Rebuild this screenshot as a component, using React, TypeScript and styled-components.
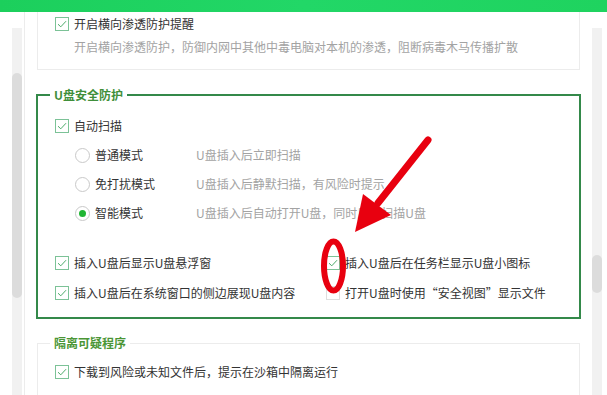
import React from "react"
import styled, { createGlobalStyle } from "styled-components"

const Global = createGlobalStyle`
  html, body {
    margin      : 0 ;
    padding     : 0 ;
    background  : #ffffff ;
    overflow    : hidden ;
  }
  body {
    font-family : "Noto Sans CJK SC", "Microsoft YaHei", sans-serif ;
    font-size   : 12px ;
    color       : #333333 ;
  }
`

const Page = styled.div`
  position        : relative ;
  width           : 607px ;
  height          : 395px ;
  display         : flex ;
  flex-direction  : column ;
  overflow        : hidden ;
`

const TitleBar = styled.div`
  height      : 12px ;
  flex        : none ;
  background  : linear-gradient(90deg, #1ccf5c 0%, #22d767 50%, #1fd35f 100%) ;
`

const Body = styled.div`
  flex      : 1 ;
  display   : flex ;
  min-height: 0 ;
`

const Rail = styled.div<{ $side: "left" | "right" }>`
  flex            : none ;
  width           : ${p => (p.$side === "left" ? "25px" : "15px")} ;
  padding-top     : 16px ;
  padding-left    : ${p => (p.$side === "left" ? "12px" : "0")} ;
  box-sizing      : border-box ;
  border-right    : ${p => (p.$side === "left" ? "1px solid #ececec" : "none")} ;
  display         : flex ;
  flex-direction  : column ;
`

const Track = styled.div<{ $offset: number }>`
  width       : 10px ;
  flex        : 1 ;
  background  : #f1f1f1 ;
  padding-top : ${p => p.$offset}px ;
  box-sizing  : border-box ;
`

const Thumb = styled.div<{ $h: number }>`
  height        : ${p => p.$h}px ;
  background    : #dcdcdc ;
  border-radius : 5px ;
`

const Content = styled.div`
  flex            : 1 ;
  padding         : 0 11px 0 11px ;
  display         : flex ;
  flex-direction  : column ;
  min-width       : 0 ;
`

const Card = styled.div`
  border        : 1px solid #ececec ;
  border-top    : none ;
  padding       : 5px 0 15px 17px ;
  margin-left   : 1px ;
  margin-right  : 1px ;
`

const Group = styled.fieldset<{ $strong?: boolean }>`
  margin      : ${p => (p.$strong ? "17px 0 0 0" : "16px 1px 0 1px")} ;
  padding     : 0 ;
  border      : ${p => (p.$strong ? "2px solid #34894a" : "1px solid #ececec")} ;
  min-width   : 0 ;
`

const Legend = styled.legend<{ $tone?: string }>`
  margin-left : 12px ;
  padding     : 0 4px ;
  font-size   : 12px ;
  line-height : 16px ;
  font-weight : bold ;
  color       : ${p => p.$tone || "#3f8f3a"} ;
`

const Inner = styled.div<{ $pt: number; $pb: number }>`
  padding : ${p => p.$pt}px 0 ${p => p.$pb}px 17px ;
`

const Row = styled.div`
  display     : flex ;
  align-items : center ;
  height      : 14px ;
  line-height : 14px ;
  white-space : nowrap ;
`

const Box = styled.span<{ $on: boolean }>`
  flex            : none ;
  width           : 14px ;
  height          : 14px ;
  box-sizing      : border-box ;
  border          : 1px solid ${p => (p.$on ? "#7cc297" : "#dedede")} ;
  background      : #ffffff ;
  margin-right    : 5px ;
  display         : flex ;
  align-items     : center ;
  justify-content : center ;
`

const Dot = styled.span<{ $on: boolean }>`
  flex            : none ;
  width           : 15px ;
  height          : 15px ;
  box-sizing      : border-box ;
  border-radius   : 50% ;
  border          : 1px solid #c9c9c9 ;
  background      : #ffffff ;
  margin-right    : 5px ;
  display         : flex ;
  align-items     : center ;
  justify-content : center ;
  &::after {
    content       : "" ;
    width         : 7px ;
    height        : 7px ;
    border-radius : 50% ;
    background    : ${p => (p.$on ? "#20b534" : "transparent")} ;
  }
`

const Desc = styled.div`
  margin-top  : 9px ;
  margin-left : 19px ;
  line-height : 14px ;
  color       : #a3a3a3 ;
  white-space : nowrap ;
`

const Modes = styled.div`
  margin-left     : 20px ;
  margin-top      : 15px ;
  display         : flex ;
  flex-direction  : column ;
  gap             : 15px ;
`

const ModeName = styled.span`
  width : 101px ;
`

const ModeHint = styled.span`
  color : #a3a3a3 ;
`

const Options = styled.div`
  margin-top            : 36px ;
  display               : grid ;
  grid-template-columns : 271px 1fr ;
  row-gap               : 16px ;
`

const Mark = styled.div`
  position        : absolute ;
  inset           : 0 ;
  pointer-events  : none ;
`

function Check({ on, children }: { on: boolean; children: React.ReactNode }) {
  return (
    <Row>
      <Box $on={on}>
        {on && (
          <svg width="10" height="8" viewBox="0 0 10 8">
            <path d="M1 4.2 L3.8 6.8 L9 1.2" fill="none" stroke="#4dab6a" strokeWidth="1" />
          </svg>
        )}
      </Box>
      {children}
    </Row>
  )
}

function Mode({ on, name, hint }: { on: boolean; name: string; hint: string }) {
  return (
    <Row>
      <Dot $on={on} />
      <ModeName>{name}</ModeName>
      <ModeHint>{hint}</ModeHint>
    </Row>
  )
}

export default function App() {
  return (
    <Page>
      <Global />
      <TitleBar />
      <Body>
        <Rail $side="left">
          <Track $offset={45}>
            <Thumb $h={225} />
          </Track>
        </Rail>
        <Content>
          <Card>
            <Check on>开启横向渗透防护提醒</Check>
            <Desc>开启横向渗透防护，防御内网中其他中毒电脑对本机的渗透，阻断病毒木马传播扩散</Desc>
          </Card>

          <Group $strong>
            <Legend>U盘安全防护</Legend>
            <Inner $pt={16} $pb={17}>
              <Check on>自动扫描</Check>
              <Modes>
                <Mode on={false} name="普通模式" hint="U盘插入后立即扫描" />
                <Mode on={false} name="免打扰模式" hint="U盘插入后静默扫描，有风险时提示" />
                <Mode on name="智能模式" hint="U盘插入后自动打开U盘，同时后台扫描U盘" />
              </Modes>
              <Options>
                <Check on>插入U盘后显示U盘悬浮窗</Check>
                <Check on>插入U盘后在任务栏显示U盘小图标</Check>
                <Check on>插入U盘后在系统窗口的侧边展现U盘内容</Check>
                <Check on={false}>打开U盘时使用“安全视图”显示文件</Check>
              </Options>
            </Inner>
          </Group>

          <Group>
            <Legend $tone="#4b9636">隔离可疑程序</Legend>
            <Inner $pt={14} $pb={20}>
              <Check on>下载到风险或未知文件后，提示在沙箱中隔离运行</Check>
            </Inner>
          </Group>
        </Content>
        <Rail $side="right">
          <Track $offset={227}>
            <Thumb $h={38} />
          </Track>
        </Rail>
      </Body>

      <Mark>
        <svg width="607" height="395" viewBox="0 0 607 395">
          <line x1="428" y1="140" x2="378" y2="203" stroke="#e8000f" strokeWidth="7" strokeLinecap="round" />
          <polygon points="355,232 363,194 391,215" fill="#e8000f" />
          <ellipse cx="333.5" cy="266" rx="9.5" ry="24.5" fill="none" stroke="#e8000f" strokeWidth="6" />
        </svg>
      </Mark>
    </Page>
  )
}
